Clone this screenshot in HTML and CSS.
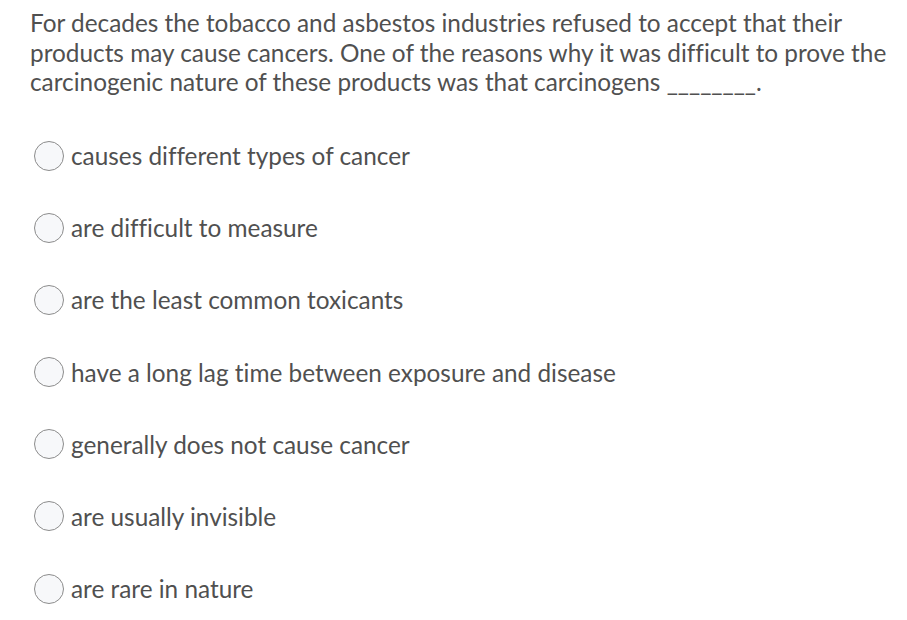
FILE: index.html
```html
<!DOCTYPE html>
<html>
<head>
<meta charset="utf-8">
<link rel="stylesheet" href="styles.css">
</head>
<body>
<div class="question">
  <p class="prompt">For decades the tobacco and asbestos industries refused to accept that their products may cause cancers. One of the reasons why it was difficult to prove the carcinogenic nature of these products was that carcinogens ________.</p>
  <ul class="options">
    <li class="option"><span class="radio"></span><span class="label">causes different types of cancer</span></li>
    <li class="option"><span class="radio"></span><span class="label">are difficult to measure</span></li>
    <li class="option"><span class="radio"></span><span class="label">are the least common toxicants</span></li>
    <li class="option"><span class="radio"></span><span class="label">have a long lag time between exposure and disease</span></li>
    <li class="option"><span class="radio"></span><span class="label">generally does not cause cancer</span></li>
    <li class="option"><span class="radio"></span><span class="label">are usually invisible</span></li>
    <li class="option"><span class="radio"></span><span class="label">are rare in nature</span></li>
  </ul>
</div>
</body>
</html>
```
FILE: styles.css
```css
html, body {
  margin: 0;
  padding: 0;
  background: #ffffff;
}
body {
  font-family: Lato, "Open Sans", sans-serif;
  color: #505050;
  font-variant-ligatures: none;
}
.question {
  padding: 8px 12px 0 30px;
}
.prompt {
  margin: 0;
  font-size: 24.35px;
  line-height: 29.5px;
}
.options {
  list-style: none;
  margin: 44px 0 0 0;
  padding: 0 0 0 4px;
  display: flex;
  flex-direction: column;
  gap: 42.2px;
}
.option {
  display: flex;
  align-items: center;
  gap: 7px;
  height: 30px;
  font-size: 24.35px;
}
.radio {
  width: 28px;
  height: 28px;
  border: 1px solid #8c8c8c;
  border-radius: 50%;
  background: #f7f8fa;
  flex: none;
}
```
